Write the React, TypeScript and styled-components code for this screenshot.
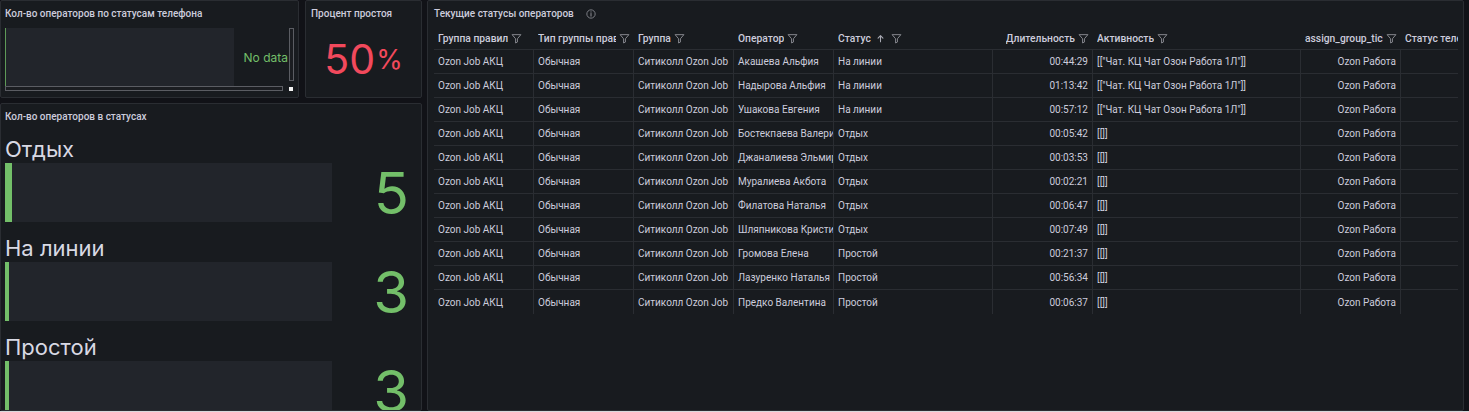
import React from "react"
import styled, { createGlobalStyle } from "styled-components"

const GlobalStyle = createGlobalStyle`
    html, body {
        margin: 0;
        padding: 0;
        background: #d8d9dc;
    }
    body {
        font-family: Roboto, Inter, "Noto Sans", sans-serif;
        color: #ccccdc;
    }
`

const Page = styled.div`
    display: grid;
    grid-template-columns: 422px 1037px;
    column-gap: 5px;
    height: 411px;
    overflow: hidden;
    background: #111217;
`

const LeftColumn = styled.div`
    display: flex;
    flex-direction: column;
    gap: 5px;
    min-height: 0;
`

const TopRow = styled.div`
    display: flex;
    gap: 6px;
    height: 98px;
    flex-shrink: 0;
`

const Panel = styled.section<{ $width?: number }>`
    display: flex;
    flex-direction: column;
    box-sizing: border-box;
    ${({ $width }) => ($width ? `width: ${$width}px; flex-shrink: 0;` : "flex: 1;")}
    min-height: 0;
    background: #181b1f;
    border: 1px solid #2a2d32;
    border-radius: 2px;
    overflow: hidden;
`

const PanelHeader = styled.header<{ $pad?: number }>`
    display: flex;
    align-items: center;
    gap: 12px;
    height: 25px;
    flex-shrink: 0;
    padding: 0 0 0 ${({ $pad }) => $pad ?? 4}px;
    font-size: 10px;
    font-weight: 500;
    color: #ccccdc;
    white-space: nowrap;
`

const InfoIcon = styled.svg`
    width: 10px;
    height: 10px;
    color: #8e8f96;
`

/* --- phone statuses (no data) --- */

const ScrollFrame = styled.div`
    display: grid;
    grid-template-columns: 283px 5px;
    grid-template-rows: 58px 5px;
    column-gap: 1px;
    margin: 2px 0 0 4px;
`

const EmptyGauge = styled.div`
    display: flex;
    align-items: center;
    justify-content: space-between;
`

const GaugeTrack = styled.div`
    width: 229px;
    height: 58px;
    background: #22252b;
    border-left: 1px solid #5f9a58;
    box-sizing: border-box;
`

const NoData = styled.span`
    font-family: Inter, sans-serif;
    font-size: 12px;
    color: #73bf69;
`

const ScrollBar = styled.div<{ $vertical?: boolean }>`
    box-sizing: border-box;
    border: 1px solid #5b5d63;
    background: #1b1d21;
    ${({ $vertical }) => ($vertical ? "height: 53px;" : "width: 278px;")}
`

const ScrollCorner = styled.div`
    background: #f4f4f4;
    width: 4px;
    height: 4px;
    margin-top: 1px;
`

/* --- idle percent --- */

const StatBody = styled.div`
    flex: 1;
    display: flex;
    align-items: center;
    justify-content: center;
    padding-bottom: 4px;
    font-family: Inter, sans-serif;
    color: #f2495c;
`

const StatValue = styled.span`
    font-size: 41px;
    line-height: 1;
`

const StatUnit = styled.span`
    font-size: 27px;
    margin-left: 1px;
`

/* --- bar gauges by status --- */

const GaugeList = styled.div`
    display: flex;
    flex-direction: column;
    gap: 13px;
    padding: 7px 0 0 4px;
    font-family: Inter, sans-serif;
`

const GaugeItem = styled.div`
    display: flex;
    flex-direction: column;
`

const GaugeLabel = styled.div`
    height: 27px;
    font-size: 22px;
    line-height: 26px;
    color: #d8d9e4;
`

const GaugeRow = styled.div`
    display: flex;
    align-items: center;
    height: 59px;
`

const GaugeBar = styled.div`
    width: 327px;
    height: 100%;
    flex-shrink: 0;
    background: #22252b;
`

const GaugeFill = styled.div`
    height: 100%;
    background: #73bf69;
`

const GaugeValue = styled.div`
    flex: 1;
    text-align: right;
    padding-right: 12px;
    font-size: 58px;
    line-height: 1;
    color: #73bf69;
`

/* --- table --- */

const COLUMNS = "100px 100px 100px 100px 159px 100px 208px 100px 160px"

const TableWrap = styled.div`
    margin: 1px 5px 0 6px;
    overflow: hidden;
    font-size: 10px;
`

const HeaderRow = styled.div`
    display: grid;
    grid-template-columns: ${COLUMNS};
    height: 22px;
    border-bottom: 1px solid #2a2d32;
`

const HeaderCell = styled.div<{ $right?: boolean }>`
    display: flex;
    align-items: center;
    justify-content: ${({ $right }) => ($right ? "flex-end" : "flex-start")};
    gap: 3px;
    padding: 0 4px;
    overflow: hidden;
    font-size: 10.3px;
    font-weight: 500;
    color: #ccccdc;

    span {
        overflow: hidden;
        white-space: nowrap;
    }

    svg {
        flex-shrink: 0;
    }
`

const BodyRow = styled.div`
    display: grid;
    grid-template-columns: ${COLUMNS};
    height: 24px;
    box-sizing: border-box;

    &:not(:last-child) {
        border-bottom: 1px solid #2a2d32;
    }
`

const Cell = styled.div<{ $right?: boolean }>`
    display: flex;
    align-items: center;
    justify-content: ${({ $right }) => ($right ? "flex-end" : "flex-start")};
    padding: 0 4px;
    overflow: hidden;
    white-space: nowrap;
    color: #ccccdc;
    border-right: 1px solid #2a2d32;
`

const FilterIcon = () => (
    <svg width="11" height="11" viewBox="0 0 12 12" fill="none">
        <path d="M1.2 1.8h9.6L7 6.3v3.6l-2 1V6.3z" stroke="#8e8f96" strokeWidth="1" strokeLinejoin="round" />
    </svg>
)

const SortIcon = () => (
    <svg width="9" height="9" viewBox="0 0 10 10" fill="none" style={{ margin: "0 3px 0 2px" }}>
        <path d="M5 8.5V2M2.3 4.6L5 1.8l2.7 2.8" stroke="#a8a9b3" strokeWidth="1.2" strokeLinecap="round" strokeLinejoin="round" />
    </svg>
)

const headers = [
    { title: "Группа правил" },
    { title: "Тип группы правил" },
    { title: "Группа" },
    { title: "Оператор" },
    { title: "Статус", sort: true },
    { title: "Длительность", right: true },
    { title: "Активность" },
    { title: "assign_group_ticket", right: true },
    { title: "Статус телефона" },
]

const chat = "[[\"Чат. КЦ Чат Озон Работа 1Л\"]]"

const rows = [
    ["Акашева Альфия", "На линии", "00:44:29", chat],
    ["Надырова Альфия", "На линии", "01:13:42", chat],
    ["Ушакова Евгения", "На линии", "00:57:12", chat],
    ["Бостекпаева Валерия", "Отдых", "00:05:42", "[[]]"],
    ["Джаналиева Эльмира", "Отдых", "00:03:53", "[[]]"],
    ["Муралиева Акбота", "Отдых", "00:02:21", "[[]]"],
    ["Филатова Наталья", "Отдых", "00:06:47", "[[]]"],
    ["Шляпникова Кристина", "Отдых", "00:07:49", "[[]]"],
    ["Громова Елена", "Простой", "00:21:37", "[[]]"],
    ["Лазуренко Наталья", "Простой", "00:56:34", "[[]]"],
    ["Предко Валентина", "Простой", "00:06:37", "[[]]"],
]

const gauges = [
    { label: "Отдых", value: 5 },
    { label: "На линии", value: 3 },
    { label: "Простой", value: 3 },
]

export default function App() {
    return (
        <>
            <GlobalStyle />
            <Page>
                <LeftColumn>
                    <TopRow>
                        <Panel $width={299}>
                            <PanelHeader>Кол-во операторов по статусам телефона</PanelHeader>
                            <ScrollFrame>
                                <EmptyGauge>
                                    <GaugeTrack />
                                    <NoData>No data</NoData>
                                </EmptyGauge>
                                <ScrollBar $vertical />
                                <ScrollBar />
                                <ScrollCorner />
                            </ScrollFrame>
                        </Panel>
                        <Panel $width={117}>
                            <PanelHeader $pad={5}>Процент простоя</PanelHeader>
                            <StatBody>
                                <StatValue>50</StatValue>
                                <StatUnit>%</StatUnit>
                            </StatBody>
                        </Panel>
                    </TopRow>
                    <Panel>
                        <PanelHeader>Кол-во операторов в статусах</PanelHeader>
                        <GaugeList>
                            {gauges.map((g) => (
                                <GaugeItem key={g.label}>
                                    <GaugeLabel>{g.label}</GaugeLabel>
                                    <GaugeRow>
                                        <GaugeBar>
                                            <GaugeFill style={{ width: `${(g.value / 230) * 100}%` }} />
                                        </GaugeBar>
                                        <GaugeValue>{g.value}</GaugeValue>
                                    </GaugeRow>
                                </GaugeItem>
                            ))}
                        </GaugeList>
                    </Panel>
                </LeftColumn>

                <Panel>
                    <PanelHeader $pad={6}>
                        Текущие статусы операторов
                        <InfoIcon viewBox="0 0 12 12" fill="none">
                            <circle cx="6" cy="6" r="5" stroke="currentColor" strokeWidth="1" />
                            <path d="M6 5.4v3.2M6 3.4v.4" stroke="currentColor" strokeWidth="1.2" strokeLinecap="round" />
                        </InfoIcon>
                    </PanelHeader>
                    <TableWrap>
                        <HeaderRow>
                            {headers.map((h) => (
                                <HeaderCell key={h.title} $right={h.right}>
                                    <span>{h.title}</span>
                                    {h.sort && <SortIcon />}
                                    <FilterIcon />
                                </HeaderCell>
                            ))}
                        </HeaderRow>
                        <div>
                            {rows.map((r) => (
                                <BodyRow key={r[0]}>
                                    <Cell>Ozon Job АКЦ</Cell>
                                    <Cell>Обычная</Cell>
                                    <Cell>Ситиколл Ozon Job</Cell>
                                    <Cell>{r[0]}</Cell>
                                    <Cell>{r[1]}</Cell>
                                    <Cell $right>{r[2]}</Cell>
                                    <Cell>{r[3]}</Cell>
                                    <Cell $right>Ozon Работа</Cell>
                                    <Cell />
                                </BodyRow>
                            ))}
                        </div>
                    </TableWrap>
                </Panel>
            </Page>
        </>
    )
}
